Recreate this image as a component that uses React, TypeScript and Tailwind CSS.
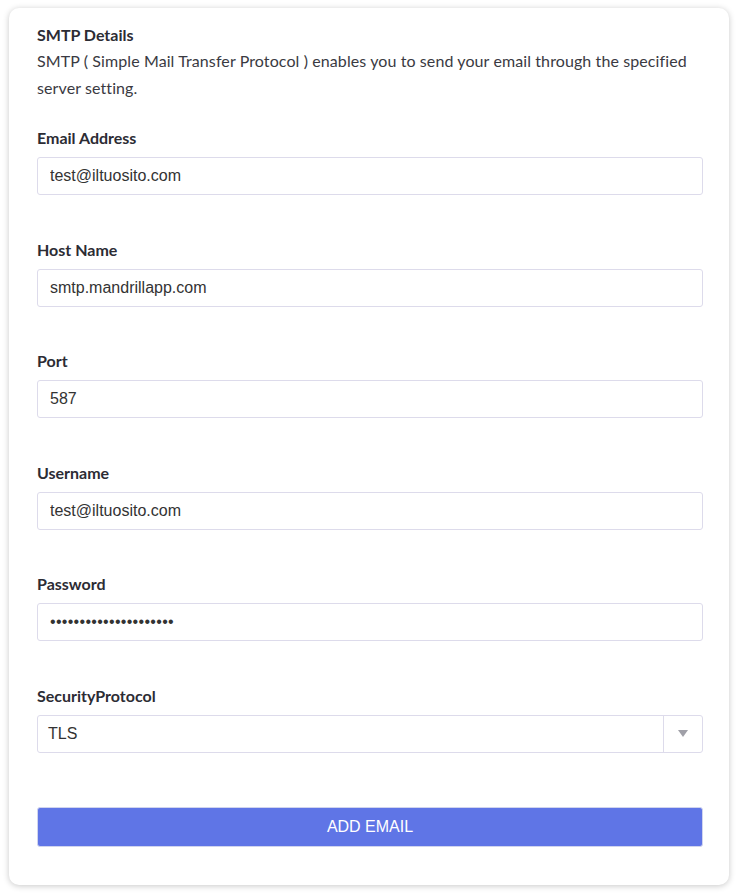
import React from 'react';

const FIELDS = [
  { label: 'Email Address', value: 'test@iltuosito.com', type: 'text' },
  { label: 'Host Name', value: 'smtp.mandrillapp.com', type: 'text' },
  { label: 'Port', value: '587', type: 'text' },
  { label: 'Username', value: 'test@iltuosito.com', type: 'text' },
  { label: 'Password', value: 'xxxxxxxxxxxxxxxxxxxxx', type: 'password' },
];

function Field({ label, value, type }: { label: string; value: string; type: string }) {
  return (
    <div className="flex flex-col gap-[7px]">
      <label className="text-[16px] leading-6 font-bold text-[#2c2c34]">{label}</label>
      <input
        type={type}
        defaultValue={value}
        className={
          'h-[38px] w-full rounded-[3px] border border-[#dddbeb] bg-white px-[12px] text-[16px] text-[#333] outline-none' +
          (type === 'password' ? ' tracking-[0.3px]' : '')
        }
        style={{ fontFamily: '"Liberation Sans", Arial, sans-serif' }}
      />
    </div>
  );
}

export default function App() {
  return (
    <div className="min-h-[894px] bg-white px-[9px] pt-[8px]" style={{ fontFamily: 'Lato, "Open Sans", sans-serif' }}>
      <div className="w-[720px] rounded-[10px] bg-white pl-[28px] pr-[26px] pt-[15px] pb-[38px] shadow-[0_1px_6px_rgba(0,0,0,0.22)]">
        <h2 className="text-[16px] leading-6 font-bold text-[#2c2c34]">SMTP Details</h2>
        <p className="text-[16px] leading-[27px] tracking-[0.1px] text-[#3a3a42]">
          SMTP ( Simple Mail Transfer Protocol ) enables you to send your email through the specified server setting.
        </p>

        <div className="mt-[25px] flex flex-col gap-[42.5px]">
          {FIELDS.map((f) => (
            <Field key={f.label} {...f} />
          ))}

          {/* Security protocol select */}
          <div className="flex flex-col gap-[7px]">
            <label className="text-[16px] leading-6 font-bold text-[#2c2c34]">SecurityProtocol</label>
            <div className="flex h-[38px] w-full rounded-[3px] border border-[#dddbeb] bg-white">
              <div
                className="flex flex-1 items-center px-[10px] text-[16px] text-[#333]"
                style={{ fontFamily: '"Liberation Sans", Arial, sans-serif' }}
              >
                TLS
              </div>
              <div className="flex w-[39px] items-center justify-center border-l border-[#dddbeb]">
                <svg width="10" height="7" viewBox="0 0 10 7">
                  <path d="M0 0 L10 0 L5 7 Z" fill="#a0a0a8" />
                </svg>
              </div>
            </div>
          </div>
        </div>

        <button
          className="mt-[54px] h-[40px] w-full rounded-[3px] border border-[#d0d4ee] bg-[#5f75e6] text-[16px] text-white"
          style={{ fontFamily: '"Liberation Sans", Arial, sans-serif' }}
        >
          ADD EMAIL
        </button>
      </div>
    </div>
  );
}
